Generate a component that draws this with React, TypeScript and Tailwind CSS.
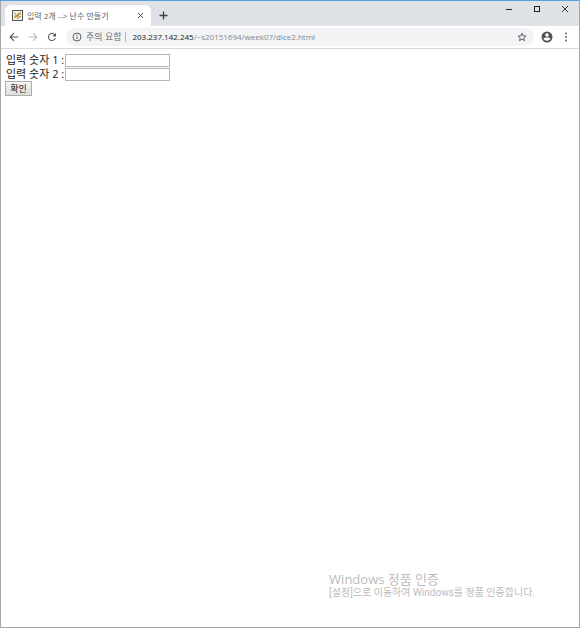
import React from "react";

const iconButton = "flex shrink-0 items-center justify-center";

function TitleBar() {
  return (
    <header className="flex h-[25px] items-end bg-[#dee1e6] pl-1">
      <div className="flex h-[21px] w-[146px] items-center rounded-t-md bg-white pr-[7px] pl-[7px]">
        <svg viewBox="0 0 11 11" className="h-[11px] w-[11px] shrink-0" aria-hidden="true">
          <rect x="0.5" y="0.5" width="10" height="10" fill="#f4f1e6" stroke="#555" />
          <path d="M2 8l1-3 2 0 1-2 3-1 0 2-2 1 1 2-3 0-1 1z" fill="#d9a03c" />
          <path d="M2 3l2 1M9 6L7 8M5 8l2 1M4 6l3-2" stroke="#7a7058" strokeWidth="0.7" fill="none" />
        </svg>
        <span className="ml-1 flex-1 truncate text-[8px] leading-3 text-[#5f6368]">
          입력 2개 --&gt; 난수 만들기
        </span>
        <button type="button" aria-label="탭 닫기" className={iconButton}>
          <svg viewBox="0 0 7 7" className="h-[7px] w-[7px]">
            <path d="M1 1l5 5M6 1L1 6" stroke="#4a4d51" strokeWidth="1" />
          </svg>
        </button>
      </div>
      <button type="button" aria-label="새 탭" className={`${iconButton} ml-2 h-[21px]`}>
        <svg viewBox="0 0 9 9" className="h-[9px] w-[9px]">
          <path d="M4.5 0.5v8M0.5 4.5h8" stroke="#3c4043" strokeWidth="1.3" />
        </svg>
      </button>
      <div className="ml-auto flex gap-5 self-start pt-1 pr-2.5">
        <button type="button" aria-label="최소화" className={iconButton}>
          <svg viewBox="0 0 8 8" className="h-2 w-2">
            <path d="M1 4.5h6" stroke="#222" />
          </svg>
        </button>
        <button type="button" aria-label="최대화" className={iconButton}>
          <svg viewBox="0 0 8 8" className="h-2 w-2">
            <rect x="1.5" y="1.5" width="5" height="5" fill="none" stroke="#222" />
          </svg>
        </button>
        <button type="button" aria-label="닫기" className={iconButton}>
          <svg viewBox="0 0 8 8" className="h-2 w-2">
            <path d="M1 1l6 6M7 1L1 7" stroke="#222" strokeWidth="0.9" />
          </svg>
        </button>
      </div>
    </header>
  );
}

function Toolbar() {
  return (
    <nav className="flex h-[23px] items-center border-b border-[#d6d8da] bg-white pr-2 pl-2">
      <button type="button" aria-label="뒤로" className={iconButton}>
        <svg viewBox="0 0 10 10" className="h-2.5 w-2.5">
          <path d="M9.2 5H1.2M4.9 1.2L1.1 5l3.8 3.8" fill="none" stroke="#505357" strokeWidth="1.1" />
        </svg>
      </button>
      <button type="button" aria-label="앞으로" className={`${iconButton} ml-[9px]`}>
        <svg viewBox="0 0 10 10" className="h-2.5 w-2.5">
          <path d="M0.8 5h8M5.1 1.2L8.9 5 5.1 8.8" fill="none" stroke="#b9bbbd" strokeWidth="1.1" />
        </svg>
      </button>
      <button type="button" aria-label="새로고침" className={`${iconButton} ml-2`}>
        <svg viewBox="0 0 24 24" className="h-3 w-3">
          <path
            d="M17.65 6.35A8 8 0 1 0 19.73 14h-2.08A6 6 0 1 1 12 6c1.66 0 3.14.69 4.22 1.78L13 11h7V4z"
            fill="#505357"
          />
        </svg>
      </button>
      <div className="ml-2 flex h-[18px] min-w-0 flex-1 items-center rounded-full bg-[#f1f3f4] pr-[7px] pl-1.5">
        <svg viewBox="0 0 10 10" className="h-2.5 w-2.5 shrink-0" aria-hidden="true">
          <circle cx="5" cy="5" r="4" fill="none" stroke="#5f6368" />
          <path d="M5 4.4v2.8M5 2.6v1" stroke="#5f6368" />
        </svg>
        <span className="ml-1 shrink-0 text-[9px] leading-3 text-[#6b6f73]">주의 요함</span>
        <span className="mr-1.5 ml-1 h-2.5 w-px shrink-0 bg-[#b4b6b9]" />
        <span className="min-w-0 flex-1 truncate text-[8px] leading-3 text-[#85888c]">
          <span className="text-[#202124]">203.237.142.245</span>/~s20151694/week07/dice2.html
        </span>
        <button type="button" aria-label="북마크" className={iconButton}>
          <svg viewBox="0 0 24 24" className="h-2.5 w-2.5">
            <path
              d="M12 3l2.7 6.2 6.6.6-5 4.4 1.5 6.5L12 17.2l-5.8 3.5 1.5-6.5-5-4.4 6.6-.6z"
              fill="none"
              stroke="#505357"
              strokeWidth="2.2"
            />
          </svg>
        </button>
      </div>
      <button type="button" aria-label="사용자" className={`${iconButton} ml-[7px]`}>
        <svg viewBox="0 0 24 24" className="h-3 w-3">
          <circle cx="12" cy="12" r="11" fill="#505357" />
          <circle cx="12" cy="8" r="3.6" fill="#fff" />
          <path d="M4.8 15.6C6.2 13.4 9 12.8 12 12.8s5.8.6 7.2 2.8c-1.6 2.6-4.2 4-7.2 4s-5.6-1.4-7.2-4z" fill="#fff" />
        </svg>
      </button>
      <button type="button" aria-label="메뉴" className={`${iconButton} ml-2`}>
        <svg viewBox="0 0 10 10" className="h-2.5 w-2.5">
          <circle cx="5" cy="1.5" r="0.9" fill="#505357" />
          <circle cx="5" cy="5" r="0.9" fill="#505357" />
          <circle cx="5" cy="8.5" r="0.9" fill="#505357" />
        </svg>
      </button>
    </nav>
  );
}

function NumberField({ id, label }: { id: string; label: string }) {
  return (
    <div className="flex h-3.5 items-center">
      <label htmlFor={id} className="w-[59px] shrink-0 whitespace-nowrap text-[11px] leading-3.5 text-[#222]">
        {label}
      </label>
      <input
        id={id}
        type="text"
        className="h-[13px] w-[105px] border border-[#b5b5b5] bg-white px-0.5 text-[9px] outline-none"
      />
    </div>
  );
}

export default function App() {
  return (
    <div className="flex min-h-screen flex-col border border-t-[#5a9fd8] border-r-[#a5a5a5] border-b-[#a5a5a5] border-l-[#a5a5a5] bg-white font-['Open_Sans','Noto_Sans_CJK_KR',sans-serif]">
      <TitleBar />
      <Toolbar />
      <main className="flex flex-1 flex-col">
        <form className="pt-1 pl-1" onSubmit={(e) => e.preventDefault()}>
          <div className="pl-px">
            <NumberField id="n1" label="입력 숫자 1 :" />
            <NumberField id="n2" label="입력 숫자 2 :" />
          </div>
          <button
            type="submit"
            className="flex h-[15px] w-[27px] items-center justify-center border border-[#adadad] bg-linear-to-b from-[#f6f6f6] to-[#dddddd] text-[9px] leading-3 whitespace-nowrap text-[#222]"
          >
            확인
          </button>
        </form>
        <aside className="mt-auto mr-11 mb-7 self-end text-[#bcbcbc]">
          <p className="text-[13px] leading-4">Windows 정품 인증</p>
          <p className="font-['Roboto','Noto_Sans_CJK_KR',sans-serif] text-[10px] leading-3">
            [설정]으로 이동하여 Windows를 정품 인증합니다.
          </p>
        </aside>
      </main>
    </div>
  );
}
